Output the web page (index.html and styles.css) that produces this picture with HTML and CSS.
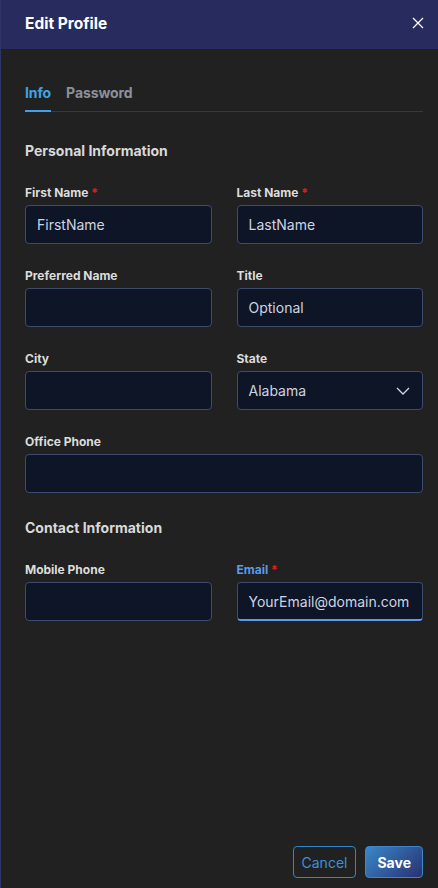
FILE: index.html
```html
<!DOCTYPE html>
<html lang="en">
<head>
    <meta charset="UTF-8">
    <meta name="viewport" content="width=device-width, initial-scale=1.0">
    <title>Edit Profile</title>
    <link rel="stylesheet" href="styles.css">
</head>
<body>
    <div class="panel">
        <div class="header">
            <div class="title">Edit Profile</div>
            <button class="close" aria-label="Close">
                <svg width="12" height="12" viewBox="0 0 12 12"><path d="M1 1L11 11M11 1L1 11" stroke="#fff" stroke-width="1.3" fill="none"/></svg>
            </button>
        </div>

        <div class="content">
            <div class="tabs">
                <div class="tab active">Info</div>
                <div class="tab">Password</div>
            </div>

            <div class="section-title">Personal Information</div>
            <div class="grid">
                <div class="field">
                    <label>First Name <span class="req">*</span></label>
                    <div class="input">FirstName</div>
                </div>
                <div class="field">
                    <label>Last Name <span class="req">*</span></label>
                    <div class="input">LastName</div>
                </div>
                <div class="field">
                    <label>Preferred Name</label>
                    <div class="input"></div>
                </div>
                <div class="field">
                    <label>Title</label>
                    <div class="input">Optional</div>
                </div>
                <div class="field">
                    <label>City</label>
                    <div class="input"></div>
                </div>
                <div class="field">
                    <label>State</label>
                    <div class="input select">
                        <span>Alabama</span>
                        <svg width="14" height="8" viewBox="0 0 14 8"><path d="M1 1L7 7L13 1" stroke="#cfd6e4" stroke-width="1.3" fill="none"/></svg>
                    </div>
                </div>
                <div class="field wide">
                    <label>Office Phone</label>
                    <div class="input"></div>
                </div>
            </div>

            <div class="section-title">Contact Information</div>
            <div class="grid">
                <div class="field">
                    <label>Mobile Phone</label>
                    <div class="input"></div>
                </div>
                <div class="field focused">
                    <label>Email <span class="req">*</span></label>
                    <div class="input">YourEmail@domain.com</div>
                </div>
            </div>
        </div>

        <div class="footer">
            <button class="btn btn-outline">Cancel</button>
            <button class="btn btn-primary">Save</button>
        </div>
    </div>
</body>
</html>
```

FILE: styles.css
```css
* {
    box-sizing: border-box;
}
html, body {
    margin: 0;
    padding: 0;
    height: 100%;
}
body {
    font-family: Inter, 'Liberation Sans', sans-serif;
    background: #212121;
    color: #e0e0e0;
}
.panel {
    height: 888px;
    display: flex;
    flex-direction: column;
    border-left: 1px solid #2c3566;
    background: #212121;
}
.header {
    height: 50px;
    background: #272b5e;
    border-bottom: 1px solid #1a1d3a;
    display: flex;
    align-items: center;
    justify-content: space-between;
    padding: 0 10px 0 24px;
    flex-shrink: 0;
}
.title {
    color: #fff;
    font-weight: 700;
    font-size: 15.5px;
    margin-top: -3px;
}
.close {
    background: none;
    border: none;
    padding: 4px;
    cursor: pointer;
    display: flex;
    margin-top: -4px;
}
.content {
    flex: 1;
    padding: 34px 15px 0 24px;
}
.tabs {
    display: flex;
    gap: 15px;
    border-bottom: 1px solid #2e3a52;
}
.tab {
    font-size: 14px;
    font-weight: 700;
    color: #8b909b;
    padding-bottom: 9px;
    border-bottom: 2px solid transparent;
    margin-bottom: -1px;
    letter-spacing: -0.1px;
}
.tab.active {
    color: #3ea3e6;
    border-bottom-color: #3ea3e6;
}
.section-title {
    font-size: 14px;
    font-weight: 700;
    color: #d9d9d9;
    margin-top: 30px;
    margin-bottom: 27px;
}
.grid {
    display: grid;
    grid-template-columns: 1fr 1fr;
    column-gap: 25px;
    row-gap: 25px;
}
.grid + .section-title {
    margin-top: 26px;
    margin-bottom: 27px;
}
.field.wide {
    grid-column: span 2;
}
.field label {
    display: block;
    font-size: 12px;
    font-weight: 700;
    color: #dcdcdc;
    margin-bottom: 5px;
    line-height: 14px;
}
.req {
    color: #e0201c;
}
.input {
    height: 39px;
    background: #0d1527;
    border: 1px solid #3e4c6b;
    border-radius: 4px;
    font-size: 14px;
    color: #cdd4e2;
    padding: 0 11px;
    display: flex;
    align-items: center;
}
.select {
    justify-content: space-between;
    padding-right: 12px;
}
.focused label {
    color: #5b9be8;
}
.focused .input {
    border-bottom: 2px solid #5b9be8;
}
.footer {
    display: flex;
    justify-content: flex-end;
    gap: 9px;
    padding: 0 15px 10px 0;
}
.btn {
    height: 32px;
    border-radius: 4px;
    font-family: inherit;
    font-size: 14px;
    cursor: pointer;
}
.btn-outline {
    background: transparent;
    border: 1px solid #2f86c6;
    color: #3a93d8;
    padding: 0 8px;
}
.btn-primary {
    background: linear-gradient(135deg, #3b87c9, #283172);
    border: 1px solid #3b87c9;
    color: #fff;
    font-weight: 700;
    padding: 0 11px;
}
```
